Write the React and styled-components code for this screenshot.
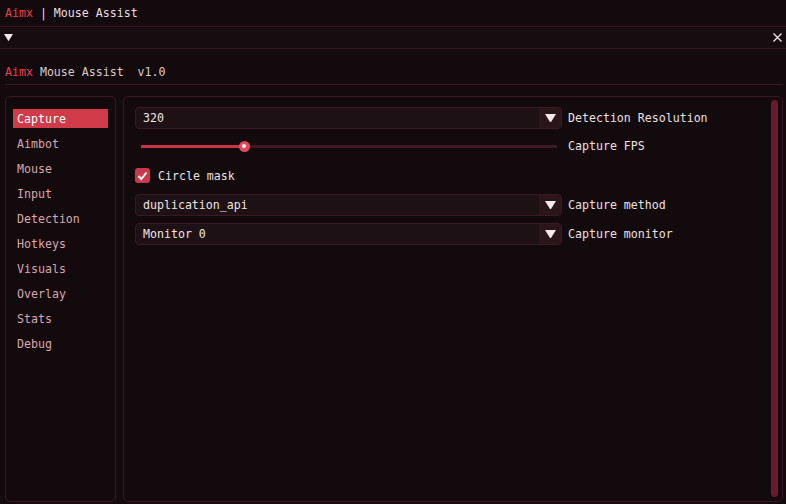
import React from "react";
import styled, { createGlobalStyle } from "styled-components";

const Global = createGlobalStyle`
  html, body { margin: 0; padding: 0; background: #130a0d; }
  * { box-sizing: border-box; }
  body { font-family: "DejaVu Sans Mono", "Liberation Mono", monospace; font-size: 11.6px; color: #ecdfe1; }
`;

const Page = styled.div`
  width: 786px;
  height: 504px;
  background: #130a0d;
  display: flex;
  flex-direction: column;
  overflow: hidden;
`;

const TitleBar = styled.div`
  height: 27px;
  display: flex;
  align-items: center;
  padding: 0 5px;
  border-bottom: 1px solid #3a1420;
  white-space: pre;
`;

const Accent = styled.span`
  color: #e8404f;
`;

const MenuBar = styled.div`
  height: 22px;
  display: flex;
  align-items: center;
  justify-content: space-between;
  padding: 0 4px 0 4px;
  background: #170d10;
  border-bottom: 1px solid #3a1420;
`;

const Glyph = styled.span`
  display: flex;
  align-items: center;
  color: #f0e6e8;
`;

const Body = styled.div`
  flex: 1;
  display: flex;
  flex-direction: column;
  padding: 0 3px 2px 5px;
  min-height: 0;
`;

const Header = styled.div`
  height: 36px;
  display: flex;
  align-items: center;
  padding-top: 11px;
  white-space: pre;
  color: #d8cacc;
  border-bottom: 1px solid #3a1420;
`;

const Columns = styled.div`
  flex: 1;
  display: flex;
  gap: 7px;
  margin-top: 11px;
  min-height: 0;
`;

const Panel = styled.div`
  border: 1px solid #3c1622;
  border-radius: 5px;
  background: #120a0d;
  position: relative;
`;

const Nav = styled(Panel)`
  width: 111px;
  display: flex;
  flex-direction: column;
  gap: 6px;
  padding: 12px 7px;
`;

const NavItem = styled.div`
  height: 19px;
  display: flex;
  align-items: center;
  padding-left: 4px;
  color: ${(p) => (p.$active ? "#ffffff" : "#dba7ae")};
  background: ${(p) => (p.$active ? "#d03a49" : "transparent")};
`;

const Content = styled(Panel)`
  flex: 1;
  padding: 10px 11px;
  display: flex;
  flex-direction: column;
`;

const Row = styled.div`
  display: flex;
  align-items: center;
  height: ${(p) => p.$h || 22}px;
  margin-bottom: ${(p) => p.$mb || 0}px;
`;

const Combo = styled.div`
  width: 427px;
  height: 100%;
  display: flex;
  border: 1px solid #3c1822;
  border-radius: 4px;
  background: #1d1115;
  overflow: hidden;
`;

const ComboValue = styled.div`
  flex: 1;
  display: flex;
  align-items: center;
  padding-left: 7px;
  color: #efe4e6;
`;

const ComboArrow = styled.div`
  width: 22px;
  display: flex;
  align-items: center;
  justify-content: center;
  background: #2a151b;
`;

const Label = styled.div`
  margin-left: 6px;
  color: #ece0e2;
`;

const SliderBox = styled.div`
  width: 427px;
  height: 100%;
  display: flex;
  align-items: center;
  padding: 0 5px 0 6px;
`;

const Track = styled.div`
  flex: 1;
  height: 3px;
  background: #3e1822;
  position: relative;
`;

const Fill = styled.div`
  height: 100%;
  background: #c73448;
`;

const Knob = styled.div`
  position: absolute;
  top: 50%;
  width: 11px;
  height: 11px;
  margin: -5.5px 0 0 -5.5px;
  border-radius: 50%;
  background: #e04a5e;
  display: flex;
  align-items: center;
  justify-content: center;
  &::after {
    content: "";
    width: 4px;
    height: 4px;
    border-radius: 50%;
    background: #fff0f2;
  }
`;

const Check = styled.div`
  width: 15px;
  height: 15px;
  border-radius: 3px;
  background: #c93a4c;
  display: flex;
  align-items: center;
  justify-content: center;
`;

const CheckLabel = styled.div`
  margin-left: 8px;
  color: #ece0e2;
`;

const Scrollbar = styled.div`
  position: absolute;
  top: 3px;
  bottom: 4px;
  right: 4px;
  width: 7px;
  border-radius: 4px;
  background: #6a1a2a;
`;

const Triangle = ({ size = 10, color = "#f2e8ea" }) => (
  <svg width={size} height={size * 0.8} viewBox="0 0 10 8">
    <polygon points="0,0 10,0 5,8" fill={color} />
  </svg>
);

const Close = () => (
  <svg width="9" height="9" viewBox="0 0 9 9">
    <path d="M0.5 0.5 L8.5 8.5 M8.5 0.5 L0.5 8.5" stroke="#f0e6e8" strokeWidth="1.3" />
  </svg>
);

const Tick = () => (
  <svg width="11" height="10" viewBox="0 0 11 10">
    <path d="M1.5 5 L4.3 8 L9.5 1.5" stroke="#fff" strokeWidth="2" fill="none" />
  </svg>
);

const ComboRow = ({ value, label, mb }) => (
  <Row $mb={mb}>
    <Combo>
      <ComboValue>{value}</ComboValue>
      <ComboArrow>
        <Triangle size={11} />
      </ComboArrow>
    </Combo>
    <Label>{label}</Label>
  </Row>
);

const navItems = ["Capture", "Aimbot", "Mouse", "Input", "Detection", "Hotkeys", "Visuals", "Overlay", "Stats", "Debug"];

export default function App() {
  const pct = 24.8;
  return (
    <Page>
      <Global />
      <TitleBar>
        <Accent>Aimx</Accent> | Mouse Assist
      </TitleBar>
      <MenuBar>
        <Glyph>
          <Triangle size={9} />
        </Glyph>
        <Glyph>
          <Close />
        </Glyph>
      </MenuBar>
      <Body>
        <Header>
          <Accent>Aimx</Accent> Mouse Assist  v1.0
        </Header>
        <Columns>
          <Nav>
            {navItems.map((n, i) => (
              <NavItem key={n} $active={i === 0}>
                {n}
              </NavItem>
            ))}
          </Nav>
          <Content>
            <ComboRow value="320" label="Detection Resolution" mb={6} />
            <Row $h={22} $mb={11}>
              <SliderBox>
                <Track>
                  <Fill style={{ width: `${pct}%` }} />
                  <Knob style={{ left: `${pct}%` }} />
                </Track>
              </SliderBox>
              <Label>Capture FPS</Label>
            </Row>
            <Row $h={15} $mb={11}>
              <Check>
                <Tick />
              </Check>
              <CheckLabel>Circle mask</CheckLabel>
            </Row>
            <ComboRow value="duplication_api" label="Capture method" mb={7} />
            <ComboRow value="Monitor 0" label="Capture monitor" />
            <Scrollbar />
          </Content>
        </Columns>
      </Body>
    </Page>
  );
}
